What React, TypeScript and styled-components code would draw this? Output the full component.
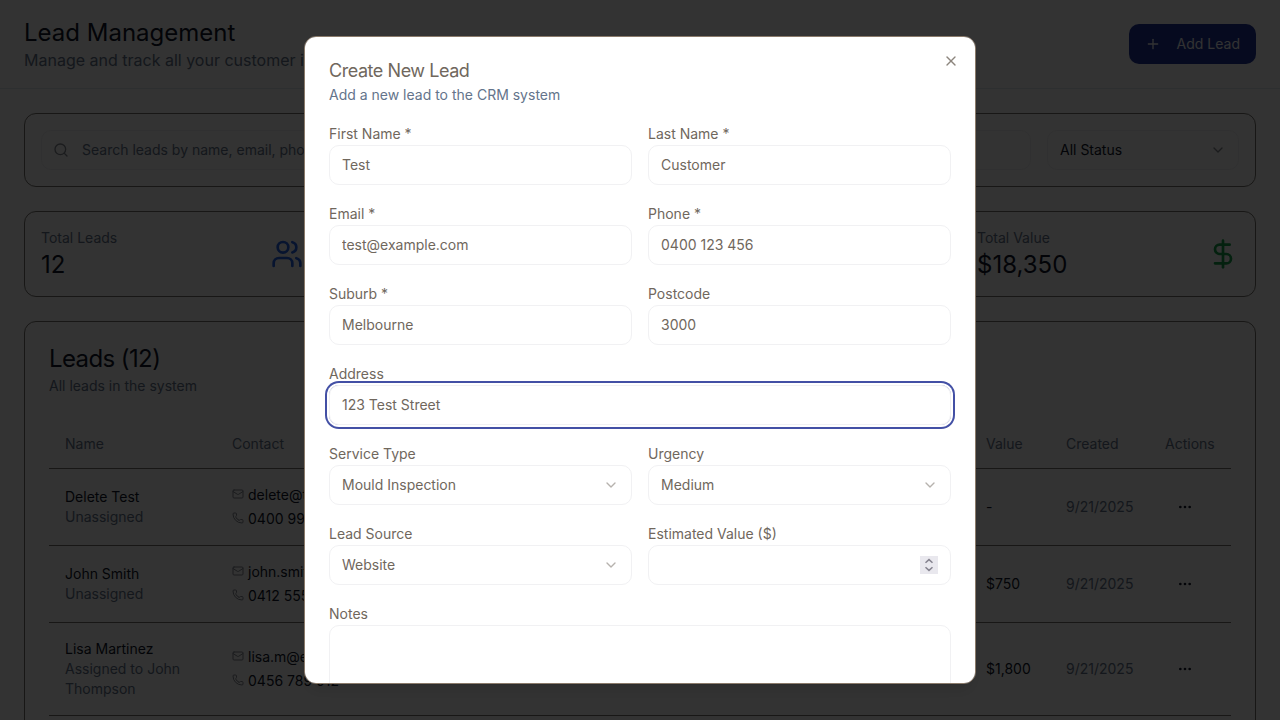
import React from 'react';
import styled, { createGlobalStyle } from 'styled-components';
import {
  ChevronDown,
  DollarSign,
  Mail,
  MoreHorizontal,
  Phone,
  Plus,
  Search,
  TrendingUp,
  UserPlus,
  Users,
  X,
} from 'lucide-react';

const color = {
  ink: '#0f172a',
  muted: '#64748b',
  brand: '#1e3399',
  ring: '#4350a5',
  dialogText: '#70675d',
  edge: '#8a7a6a',
  cardEdge: '#78756f',
  field: '#f1f1f3',
};

const GlobalStyle = createGlobalStyle`
  *, *::before, *::after { box-sizing: border-box; }
  body {
    margin: 0;
    overflow: hidden;
    background: #fcfcfd;
    color: ${color.ink};
    font-family: Inter, "Liberation Sans", sans-serif;
    font-size: 14px;
    font-weight: 400;
    line-height: 20px;
  }
  h1, h2, p { margin: 0; font-weight: inherit; }
  button, input, select, textarea { font: inherit; letter-spacing: inherit; color: inherit; }
`;

const Header = styled.header`
  display: flex;
  align-items: center;
  justify-content: space-between;
  padding: 16px 24px;
  background: #fff;
  border-bottom: 1px solid #e2e8f0;
`;

const PageTitle = styled.h1`
  padding-top: 2px;
  font-size: 24px;
  line-height: 30px;
`;

const PageSubtitle = styled.p`
  font-size: 16px;
  line-height: 24px;
  color: ${color.muted};
`;

const PrimaryButton = styled.button`
  display: inline-flex;
  align-items: center;
  gap: 16px;
  height: 40px;
  padding: 0 16px;
  border: 0;
  border-radius: 10px;
  background: ${color.brand};
  color: #f8fafc;
`;

const Content = styled.main`
  display: flex;
  flex-direction: column;
  gap: 24px;
  padding: 24px;
`;

const Card = styled.section<{ $pad: number }>`
  padding: ${(p) => p.$pad}px;
  background: #fff;
  border: 1px solid ${color.cardEdge};
  border-radius: 12px;
`;

const FilterBar = styled(Card)`
  display: flex;
  gap: 16px;
`;

const Control = styled.div<{ $width?: string }>`
  position: relative;
  flex: ${(p) => (p.$width ? 'none' : '1')};
  width: ${(p) => p.$width || 'auto'};
`;

const ControlIcon = styled.span<{ $side: 'left' | 'right' }>`
  position: absolute;
  top: 12px;
  ${(p) => p.$side}: ${(p) => (p.$side === 'left' ? 12 : 13)}px;
  display: flex;
  opacity: 0.5;
  pointer-events: none;
`;

const Spinner = styled.span`
  position: absolute;
  top: 11px;
  right: 13px;
  display: flex;
  width: 18px;
  height: 18px;
  background: #e9e8ee;
  color: #85838f;
  pointer-events: none;
`;

const fieldBox = `
  display: block;
  width: 100%;
  height: 40px;
  padding: 0 12px;
  background: transparent;
  border: 1px solid ${color.field};
  border-radius: 10px;
  outline: none;
`;

const TextInput = styled.input<{ $active?: boolean; $icon?: boolean }>`
  ${fieldBox}
  padding-bottom: 2px;
  padding-left: ${(p) => (p.$icon ? 40 : 12)}px;
  box-shadow: ${(p) => (p.$active ? `0 0 0 2px #fff, 0 0 0 4px ${color.ring}` : 'none')};
  &::placeholder { color: ${color.muted}; opacity: 1; }
  &::-webkit-inner-spin-button { opacity: 0; }
`;

const SelectInput = styled.select`
  ${fieldBox}
  appearance: none;
`;

const TextArea = styled.textarea`
  ${fieldBox}
  height: 80px;
  padding: 8px 12px;
  resize: none;
`;

const StatGrid = styled.div`
  display: grid;
  grid-template-columns: repeat(4, 1fr);
  gap: 16px;
`;

const StatCard = styled(Card)`
  display: flex;
  align-items: center;
  justify-content: space-between;
`;

const Muted = styled.p`
  color: ${color.muted};
`;

const StatValue = styled.p`
  padding-top: 2px;
  font-size: 24px;
  line-height: 30px;
`;

const CardHead = styled.div`
  display: flex;
  flex-direction: column;
  gap: 6px;
  margin-bottom: 24px;
`;

const CardTitle = styled.h2`
  padding-top: 2px;
  font-size: 24px;
  line-height: 22px;
  letter-spacing: -0.025em;
`;

const Table = styled.table`
  width: 100%;
  border-collapse: separate;
  border-spacing: 0;
  table-layout: fixed;
`;

const Th = styled.th<{ $w?: number }>`
  width: ${(p) => (p.$w ? `${p.$w}px` : 'auto')};
  height: 49px;
  padding: 0 16px;
  text-align: left;
  font-weight: inherit;
  color: ${color.muted};
  border-bottom: 1px solid ${color.cardEdge};
`;

const Td = styled.td`
  padding: 16px;
  vertical-align: middle;
  border-bottom: 1px solid ${color.cardEdge};
`;

const ContactList = styled.div`
  display: flex;
  flex-direction: column;
  gap: 4px;
`;

const ContactLine = styled.div`
  display: flex;
  gap: 4px;
  white-space: nowrap;
  svg { margin-top: 3px; opacity: 0.5; }
`;

const RowMenu = styled.button`
  display: inline-flex;
  padding: 10px 12px;
  border: 0;
  border-radius: 10px;
  background: transparent;
`;

const Overlay = styled.div`
  position: fixed;
  inset: 0;
  display: flex;
  align-items: center;
  justify-content: center;
  background: rgba(0, 0, 0, 0.8);
`;

const Dialog = styled.div`
  position: relative;
  display: flex;
  flex-direction: column;
  gap: 16px;
  width: 100%;
  max-width: 672px;
  max-height: 90vh;
  padding: 24px;
  overflow-y: auto;
  scrollbar-width: none;
  background: #fff;
  color: ${color.dialogText};
  border: 1px solid ${color.edge};
  border-radius: 12px;
  box-shadow: 0 10px 15px -3px rgba(0, 0, 0, 0.1), 0 4px 6px -4px rgba(0, 0, 0, 0.1);
`;

const DialogHead = styled.div`
  display: flex;
  flex-direction: column;
  gap: 6px;
`;

const DialogTitle = styled.h2`
  padding-top: 2px;
  font-size: 18px;
  line-height: 16px;
  letter-spacing: -0.025em;
`;

const CloseButton = styled.button`
  position: absolute;
  top: 16px;
  right: 16px;
  display: flex;
  padding: 0;
  border: 0;
  background: transparent;
  opacity: 0.8;
`;

const Form = styled.form`
  display: grid;
  grid-template-columns: 1fr 1fr;
  gap: 16px;
`;

const FieldBox = styled.div<{ $wide?: boolean }>`
  grid-column: ${(p) => (p.$wide ? '1 / -1' : 'auto')};
`;

const Label = styled.label`
  display: block;
  line-height: 24px;
  padding-top: 1px;
  height: 24px;
`;

const FormActions = styled.div`
  grid-column: 1 / -1;
  display: flex;
  justify-content: flex-end;
`;

function Select({ id, label, options }: { id: string; label?: string; options: string[] }) {
  return (
    <>
      <SelectInput id={id} aria-label={label}>
        {options.map((o) => (
          <option key={o}>{o}</option>
        ))}
      </SelectInput>
      <ControlIcon $side="right">
        <ChevronDown size={16} />
      </ControlIcon>
    </>
  );
}

type FieldProps = {
  id: string;
  label: string;
  value?: string;
  type?: string;
  options?: string[];
  wide?: boolean;
  active?: boolean;
};

function Field({ id, label, value, type = 'text', options, wide, active }: FieldProps) {
  return (
    <FieldBox $wide={wide}>
      <Label htmlFor={id}>{label}</Label>
      <Control>
        {options ? (
          <Select id={id} options={options} />
        ) : type === 'area' ? (
          <TextArea id={id} />
        ) : (
          <TextInput id={id} type={type} defaultValue={value} $active={active} />
        )}
        {type === 'number' && (
          <Spinner>
            <svg width="18" height="18" viewBox="0 0 18 18" fill="none" stroke="currentColor" strokeWidth="1.5">
              <path d="M5.5 6.8 9 3.6l3.5 3.2M5.5 11.2 9 14.4l3.5-3.2" />
            </svg>
          </Spinner>
        )}
      </Control>
    </FieldBox>
  );
}

const fields: FieldProps[] = [
  { id: 'firstName', label: 'First Name *', value: 'Test' },
  { id: 'lastName', label: 'Last Name *', value: 'Customer' },
  { id: 'email', label: 'Email *', value: 'test@example.com', type: 'email' },
  { id: 'phone', label: 'Phone *', value: '0400 123 456', type: 'tel' },
  { id: 'suburb', label: 'Suburb *', value: 'Melbourne' },
  { id: 'postcode', label: 'Postcode', value: '3000' },
  { id: 'address', label: 'Address', value: '123 Test Street', wide: true, active: true },
  { id: 'service', label: 'Service Type', options: ['Mould Inspection'] },
  { id: 'urgency', label: 'Urgency', options: ['Medium', 'Low', 'High'] },
  { id: 'source', label: 'Lead Source', options: ['Website', 'Phone'] },
  { id: 'value', label: 'Estimated Value ($)', type: 'number' },
  { id: 'notes', label: 'Notes', type: 'area', wide: true },
];

const stats = [
  { label: 'Total Leads', value: '12', Icon: Users, tint: '#2563eb' },
  { label: 'New Leads', value: '4', Icon: UserPlus, tint: '#ca8a04' },
  { label: 'Converted', value: '2', Icon: TrendingUp, tint: '#9333ea' },
  { label: 'Total Value', value: '$18,350', Icon: DollarSign, tint: '#16a34a' },
];

const leads = [
  { name: 'Delete Test', owner: 'Unassigned', email: 'delete@test.com', phone: '0400 999 999', value: '-' },
  { name: 'John Smith', owner: 'Unassigned', email: 'john.smith@email.com', phone: '0412 555 123', value: '$750' },
  { name: 'Lisa Martinez', owner: 'Assigned to John Thompson', email: 'lisa.m@email.com', phone: '0456 789 012', value: '$1,800' },
];

export default function App() {
  return (
    <>
      <GlobalStyle />
      <Header>
        <div>
          <PageTitle>Lead Management</PageTitle>
          <PageSubtitle>Manage and track all your customer inquiries</PageSubtitle>
        </div>
        <PrimaryButton type="button">
          <Plus size={16} />
          Add Lead
        </PrimaryButton>
      </Header>
      <Content>
        <FilterBar $pad={16}>
          <Control>
            <ControlIcon $side="left">
              <Search size={16} />
            </ControlIcon>
            <TextInput
              $icon
              type="text"
              aria-label="Search leads"
              placeholder="Search leads by name, email, phone, or suburb..."
            />
          </Control>
          <Control $width="192px">
            <Select id="status" label="Status" options={['All Status']} />
          </Control>
        </FilterBar>
        <StatGrid>
          {stats.map(({ label, value, Icon, tint }) => (
            <StatCard key={label} $pad={16}>
              <div>
                <Muted>{label}</Muted>
                <StatValue>{value}</StatValue>
              </div>
              <Icon size={32} color={tint} />
            </StatCard>
          ))}
        </StatGrid>
        <Card $pad={24}>
          <CardHead>
            <CardTitle>Leads (12)</CardTitle>
            <Muted>All leads in the system</Muted>
          </CardHead>
          <Table>
            <thead>
              <tr>
                <Th $w={167}>Name</Th>
                <Th>Contact</Th>
                <Th>Service</Th>
                <Th>Status</Th>
                <Th $w={80}>Value</Th>
                <Th $w={99}>Created</Th>
                <Th $w={82}>Actions</Th>
              </tr>
            </thead>
            <tbody>
              {leads.map((lead) => (
                <tr key={lead.name}>
                  <Td>
                    <p>{lead.name}</p>
                    <Muted>{lead.owner}</Muted>
                  </Td>
                  <Td>
                    <ContactList>
                      <ContactLine>
                        <Mail size={12} />
                        {lead.email}
                      </ContactLine>
                      <ContactLine>
                        <Phone size={12} />
                        {lead.phone}
                      </ContactLine>
                    </ContactList>
                  </Td>
                  <Td>Mould Inspection</Td>
                  <Td>New</Td>
                  <Td>{lead.value}</Td>
                  <Td>
                    <Muted>9/21/2025</Muted>
                  </Td>
                  <Td>
                    <RowMenu type="button" aria-label={`Actions for ${lead.name}`}>
                      <MoreHorizontal size={16} />
                    </RowMenu>
                  </Td>
                </tr>
              ))}
            </tbody>
          </Table>
        </Card>
      </Content>
      <Overlay>
        <Dialog role="dialog" aria-modal="true" aria-labelledby="dialog-title">
          <DialogHead>
            <DialogTitle id="dialog-title">Create New Lead</DialogTitle>
            <Muted>Add a new lead to the CRM system</Muted>
          </DialogHead>
          <Form>
            {fields.map((field) => (
              <Field key={field.id} {...field} />
            ))}
            <FormActions>
              <PrimaryButton type="submit">Create Lead</PrimaryButton>
            </FormActions>
          </Form>
          <CloseButton type="button" aria-label="Close">
            <X size={16} />
          </CloseButton>
        </Dialog>
      </Overlay>
    </>
  );
}
